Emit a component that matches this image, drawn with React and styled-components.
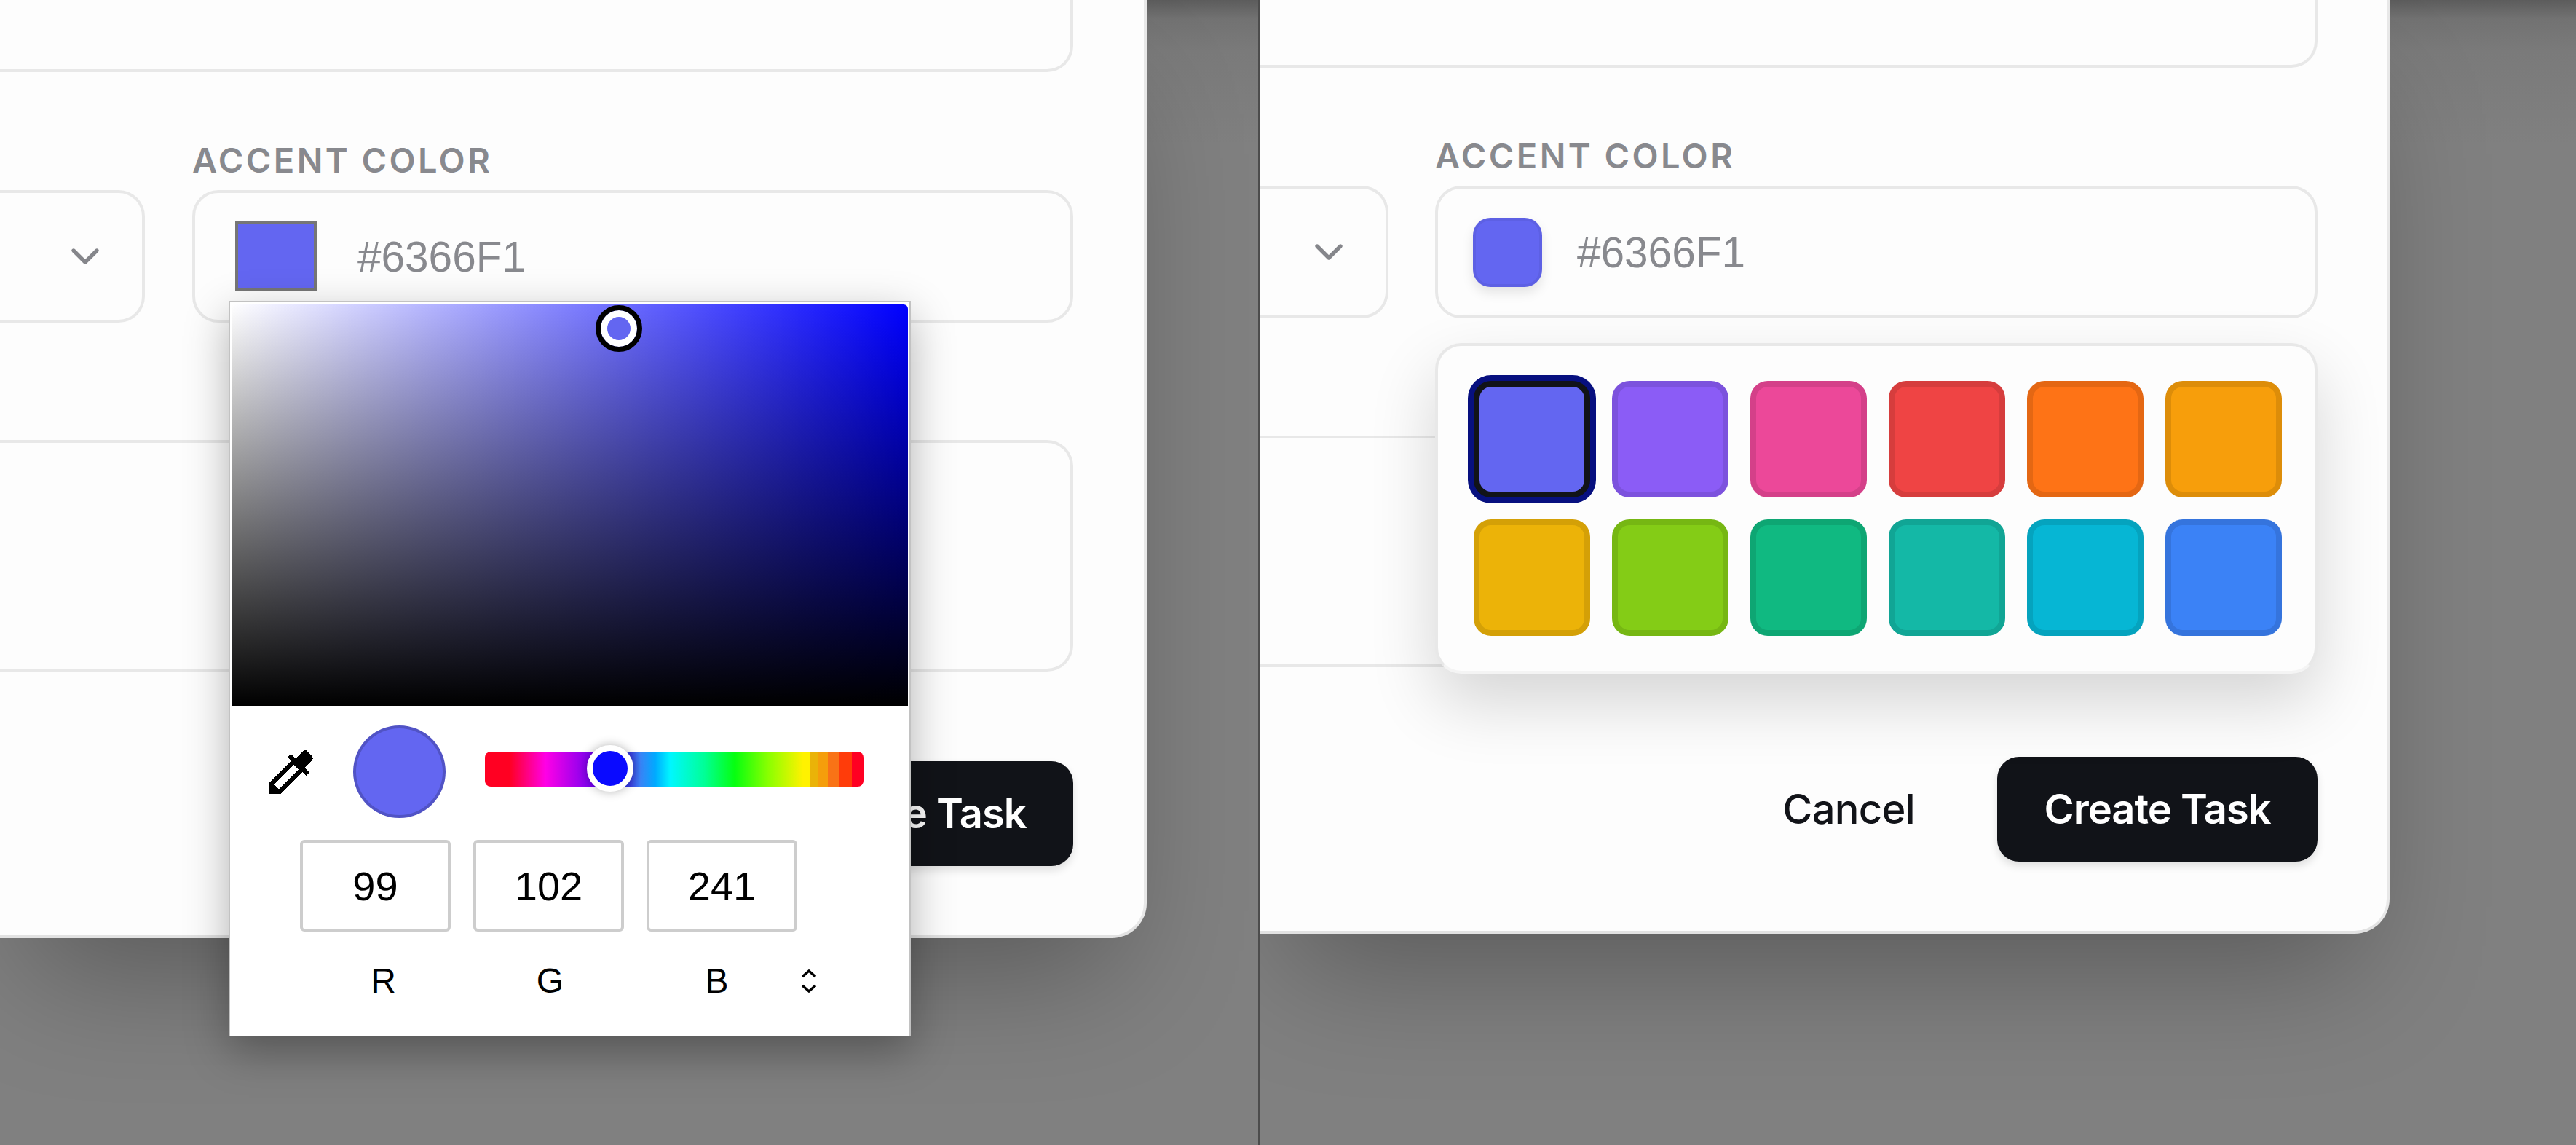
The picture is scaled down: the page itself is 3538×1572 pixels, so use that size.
import { ChevronDown } from "lucide-react";
import styled, { createGlobalStyle } from "styled-components";

const GlobalStyle = createGlobalStyle`
  * {
    box-sizing: border-box;
  }

  html, body {
    margin: 0;
    width: 3538px;
    height: 1572px;
    overflow: hidden;
    background: #808080;
    font-family: "Liberation Sans", Arial, sans-serif;
  }
`;

const Page = styled.div`
  display: grid;
  grid-template-columns: 1728px 2px 1fr;
  width: 3538px;
  height: 1572px;
`;

const Pane = styled.div`
  overflow: hidden;
  background: linear-gradient(#5c5c5c 0, #727272 26px, #7a7a7a 70px, #808080 200px);
`;

const Divider = styled.div`
  background: #4c4c4c;
`;

const Modal = styled.div`
  display: flex;
  flex-direction: column;
  width: ${(p) => p.$width}px;
  padding: 0 ${(p) => p.$padRight}px 95px 0;
  background: #fdfdfd;
  border-right: 4px solid #e8e8e8;
  border-bottom: 4px solid #e2e2e2;
  border-bottom-right-radius: 48px;
  box-shadow: 0 87px 175px -42px rgba(0, 0, 0, 0.3);
`;

const TextBox = styled.div`
  height: ${(p) => p.$height}px;
  border: 4px solid #e8e8e8;
  border-left: none;
  border-top: ${(p) => (p.$open ? "none" : "4px solid #e8e8e8")};
  border-radius: ${(p) => (p.$open ? "0 0 36px 0" : "0 36px 36px 0")};
`;

const FieldRow = styled.div`
  display: grid;
  grid-template-columns: ${(p) => p.$selectWidth}px 1fr;
  column-gap: ${(p) => p.$gap}px;
  align-items: end;
  margin: 91px 0 161px;
`;

const SelectBox = styled.div`
  display: flex;
  align-items: center;
  justify-content: flex-end;
  height: 182px;
  padding-right: 46px;
  color: #85868b;
  border: 4px solid #e8e8e8;
  border-left: none;
  border-radius: 0 36px 36px 0;
`;

const Field = styled.div`
  position: relative;
`;

const FieldLabel = styled.div`
  margin-bottom: 11px;
  font-family: Inter, "Liberation Sans", sans-serif;
  font-size: 47px;
  font-weight: 600;
  line-height: 60px;
  letter-spacing: 3.4px;
  color: #88898e;
`;

const ColorInput = styled.div`
  display: flex;
  align-items: center;
  gap: ${(p) => p.$gap}px;
  height: 182px;
  padding-left: ${(p) => p.$padLeft}px;
  border: 4px solid #e8e8e8;
  border-radius: 36px;
`;

const NativeSwatch = styled.div`
  width: 112px;
  height: 96px;
  background: #6366f1;
  border: 4px solid #767676;
`;

const RoundSwatch = styled.div`
  width: 95px;
  height: 95px;
  background: #6366f1;
  border: 4px solid rgba(0, 0, 0, 0.05);
  border-radius: 24px;
  box-shadow: 0 8px 16px rgba(0, 0, 0, 0.1);
`;

const HexText = styled.span`
  font-size: 58.5px;
  color: #88898e;
`;

const Actions = styled.div`
  display: flex;
  justify-content: flex-end;
  align-items: center;
  gap: 113px;
  margin-top: 123px;
`;

const CancelButton = styled.div`
  font-family: Inter, "Liberation Sans", sans-serif;
  font-size: 56px;
  font-weight: 500;
  letter-spacing: -0.7px;
  color: #111318;
`;

const CreateButton = styled.div`
  display: flex;
  align-items: center;
  justify-content: center;
  width: 440px;
  height: 144px;
  font-family: Inter, "Liberation Sans", sans-serif;
  font-size: 56px;
  font-weight: 600;
  letter-spacing: -1px;
  color: #fff;
  background: #111318;
  border-radius: 30px;
  box-shadow: 0 6px 12px rgba(0, 0, 0, 0.12);
`;

const PresetPanel = styled.div`
  position: absolute;
  z-index: 5;
  top: calc(100% + 34px);
  left: 0;
  right: 0;
  display: grid;
  grid-template-columns: repeat(6, 160px);
  gap: 30px;
  padding: 48px 48px 48px 49px;
  background: #fdfdfd;
  border: 4px solid #e8e8e8;
  border-bottom-color: #f4f4f4;
  border-radius: 36px;
  box-shadow: 0 40px 90px rgba(0, 0, 0, 0.16);
`;

const Preset = styled.div`
  width: 160px;
  height: 160px;
  background: ${(p) => p.$color};
  background-clip: border-box;
  border: 8px solid ${(p) => (p.$selected ? "#111318" : "rgba(0, 0, 0, 0.1)")};
  border-radius: 24px;
  box-shadow: ${(p) => (p.$selected ? "0 0 0 8px #07107f" : "none")};
`;

const Picker = styled.div`
  position: absolute;
  z-index: 5;
  top: 223px;
  left: 50px;
  display: flex;
  flex-direction: column;
  width: 937px;
  height: 1010px;
  padding: 3px 2px 0;
  background: #fff;
  border: 2px solid #c2c2c2;
  border-bottom: none;
  box-shadow: 0 20px 56px rgba(0, 0, 0, 0.3);
`;

const SaturationArea = styled.div`
  position: relative;
  flex: none;
  height: 551px;
  background: linear-gradient(to top, #000, transparent),
    linear-gradient(to right, #fff, #00f);
  border-top-right-radius: 6px;
`;

const AreaMarker = styled.div`
  position: absolute;
  top: 1px;
  left: 500px;
  width: 64px;
  height: 64px;
  background: #6366f1;
  border: 7px solid #000;
  border-radius: 50%;
  box-shadow: inset 0 0 0 9px #fff;
`;

const ControlsRow = styled.div`
  display: flex;
  align-items: center;
  margin-top: 27px;
  padding-left: 42px;
`;

const DropperIcon = styled.svg`
  flex: none;
  width: 80px;
  height: 80px;
  margin-right: 45px;
  shape-rendering: crispEdges;
`;

const CurrentColor = styled.div`
  flex: none;
  width: 127px;
  height: 127px;
  margin-right: 54px;
  background: #6366f1;
  border: 4px solid rgba(0, 0, 0, 0.18);
  border-radius: 50%;
`;

const HueTrack = styled.div`
  position: relative;
  width: 520px;
  height: 48px;
  margin-bottom: 7px;
  border-radius: 8px;
  background: linear-gradient(
    to right,
    #ff0022 0%,
    #ff0022 6.5%,
    #ff00e6 16%,
    #7b00f0 28%,
    #0a0aff 33%,
    #3b40e0 38.5%,
    #3b82f6 41%,
    #00aaff 45%,
    #00f7ff 49%,
    #00ff96 58%,
    #06ff10 66%,
    #8cff00 75%,
    #fff200 84%,
    #fff200 86%,
    #eab308 86%,
    #eab308 88%,
    #f59e0b 88%,
    #f59e0b 90.5%,
    #f97316 90.5%,
    #f97316 93.5%,
    #ff3c0a 93.5%,
    #ff3c0a 97%,
    #ff0022 97%
  );
`;

const HueThumb = styled.div`
  position: absolute;
  top: -9px;
  left: 140px;
  width: 64px;
  height: 64px;
  background: #0a0aff;
  border: 8px solid #fff;
  border-radius: 50%;
  box-shadow: 0 0 14px rgba(0, 0, 0, 0.3);
`;

const ChannelRow = styled.div`
  display: flex;
  gap: 31px;
  margin-top: 30px;
  padding-left: 94px;
`;

const ChannelInput = styled.div`
  display: flex;
  align-items: center;
  justify-content: center;
  width: 207px;
  height: 126px;
  font-size: 56px;
  color: #000;
  border: 4px solid #cdcdcd;
  border-radius: 6px;
`;

const LabelRow = styled.div`
  display: flex;
  align-items: center;
  margin-top: 34px;
  padding-left: 94px;
`;

const ChannelLabel = styled.div`
  width: 229px;
  font-size: 48px;
  line-height: 68px;
  text-align: center;
  color: #000;
`;

const ToggleIcon = styled.svg`
  width: 24px;
  height: 34px;
`;

const presets = [
  "#6366F1",
  "#8B5CF6",
  "#EC4899",
  "#EF4444",
  "#FE7316",
  "#F79E0B",
  "#ECB308",
  "#84CC16",
  "#10B981",
  "#14B8A6",
  "#06B6D4",
  "#3B82F6",
];

const ColorPicker = () => (
  <Picker>
    <SaturationArea>
      <AreaMarker />
    </SaturationArea>
    <ControlsRow>
      <DropperIcon viewBox="0 0 24 24" fill="#000">
        <path d="M20.71 5.63l-2.34-2.34c-.39-.39-1.02-.39-1.41 0l-3.12 3.12-1.93-1.91-1.41 1.41 1.42 1.42L3 16.25V21h4.75l8.92-8.92 1.42 1.42 1.41-1.41-1.92-1.92 3.12-3.12c.4-.4.4-1.03.01-1.42zM6.92 19L5 17.08l8.06-8.06 1.92 1.92L6.92 19z" />
      </DropperIcon>
      <CurrentColor />
      <HueTrack>
        <HueThumb />
      </HueTrack>
    </ControlsRow>
    <ChannelRow>
      <ChannelInput>99</ChannelInput>
      <ChannelInput>102</ChannelInput>
      <ChannelInput>241</ChannelInput>
    </ChannelRow>
    <LabelRow>
      <ChannelLabel>R</ChannelLabel>
      <ChannelLabel>G</ChannelLabel>
      <ChannelLabel>B</ChannelLabel>
      <ToggleIcon viewBox="0 0 24 34" fill="none" stroke="#000" strokeWidth="3.5">
        <path d="M3 11 12 3l9 8M3 23l9 8 9-8" />
      </ToggleIcon>
    </LabelRow>
  </Picker>
);

const TaskForm = ({ width, padRight, topHeight, selectWidth, gap, children, swatch }) => (
  <Modal $width={width} $padRight={padRight}>
    <TextBox $open $height={topHeight} />
    <FieldRow $selectWidth={selectWidth} $gap={gap}>
      <SelectBox>
        <ChevronDown size={64} strokeWidth={2} />
      </SelectBox>
      <Field>
        <FieldLabel>ACCENT COLOR</FieldLabel>
        {swatch}
        {children}
      </Field>
    </FieldRow>
    <TextBox $height={318} />
    <Actions>
      <CancelButton>Cancel</CancelButton>
      <CreateButton>Create Task</CreateButton>
    </Actions>
  </Modal>
);

const App = () => (
  <Page>
    <GlobalStyle />
    <Pane>
      <TaskForm
        width={1575}
        padRight={97}
        topHeight={99}
        selectWidth={199}
        gap={65}
        swatch={
          <ColorInput $padLeft={55} $gap={56}>
            <NativeSwatch />
            <HexText>#6366F1</HexText>
          </ColorInput>
        }
      >
        <ColorPicker />
      </TaskForm>
    </Pane>
    <Divider />
    <Pane>
      <TaskForm
        width={1552}
        padRight={95}
        topHeight={93}
        selectWidth={177}
        gap={64}
        swatch={
          <ColorInput $padLeft={48} $gap={48}>
            <RoundSwatch />
            <HexText>#6366F1</HexText>
          </ColorInput>
        }
      >
        <PresetPanel>
          {presets.map((color, i) => (
            <Preset key={color} $color={color} $selected={i === 0} />
          ))}
        </PresetPanel>
      </TaskForm>
    </Pane>
  </Page>
);

export default App;
